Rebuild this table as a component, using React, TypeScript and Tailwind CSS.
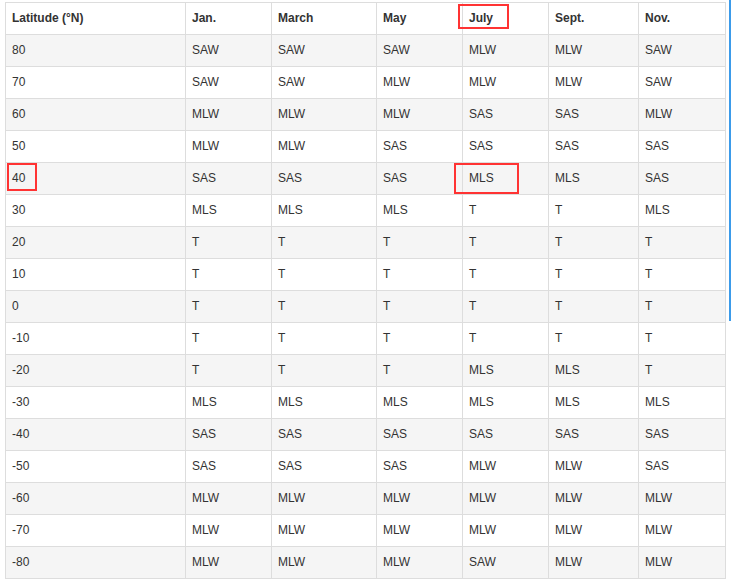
const months = ['Jan.', 'March', 'May', 'July', 'Sept.', 'Nov.'];

const rows: [string, string[]][] = [
  ['80', ['SAW', 'SAW', 'SAW', 'MLW', 'MLW', 'SAW']],
  ['70', ['SAW', 'SAW', 'MLW', 'MLW', 'MLW', 'SAW']],
  ['60', ['MLW', 'MLW', 'MLW', 'SAS', 'SAS', 'MLW']],
  ['50', ['MLW', 'MLW', 'SAS', 'SAS', 'SAS', 'SAS']],
  ['40', ['SAS', 'SAS', 'SAS', 'MLS', 'MLS', 'SAS']],
  ['30', ['MLS', 'MLS', 'MLS', 'T', 'T', 'MLS']],
  ['20', ['T', 'T', 'T', 'T', 'T', 'T']],
  ['10', ['T', 'T', 'T', 'T', 'T', 'T']],
  ['0', ['T', 'T', 'T', 'T', 'T', 'T']],
  ['-10', ['T', 'T', 'T', 'T', 'T', 'T']],
  ['-20', ['T', 'T', 'T', 'MLS', 'MLS', 'T']],
  ['-30', ['MLS', 'MLS', 'MLS', 'MLS', 'MLS', 'MLS']],
  ['-40', ['SAS', 'SAS', 'SAS', 'SAS', 'SAS', 'SAS']],
  ['-50', ['SAS', 'SAS', 'SAS', 'MLW', 'MLW', 'SAS']],
  ['-60', ['MLW', 'MLW', 'MLW', 'MLW', 'MLW', 'MLW']],
  ['-70', ['MLW', 'MLW', 'MLW', 'MLW', 'MLW', 'MLW']],
  ['-80', ['MLW', 'MLW', 'MLW', 'SAW', 'MLW', 'MLW']],
];

const cell = 'flex h-[32px] items-center border-r border-b border-[#dddddd] pb-[2px] pl-[6px]';

export default function App() {
  return (
    <div className="relative h-[584px] w-[731px] overflow-hidden bg-white pt-[2px] pl-[5px] font-['Liberation_Sans',Arial,sans-serif] text-[12px] text-[#333333]">
      <div className="grid w-[721px] grid-cols-[180px_86px_105px_86px_86px_90px_87px] border-t border-l border-[#dddddd]">
        <div className={`${cell} font-bold`}>Latitude (°N)</div>
        {months.map((m) => (
          <div key={m} className={`${cell} font-bold`}>
            {m}
          </div>
        ))}
        {rows.map(([lat, vals], i) => (
          <div key={lat} className="contents">
            <div className={`${cell} ${i % 2 === 0 ? 'bg-[#f5f5f5]' : 'bg-white'}`}>{lat}</div>
            {vals.map((v, j) => (
              <div key={j} className={`${cell} ${i % 2 === 0 ? 'bg-[#f5f5f5]' : 'bg-white'}`}>
                {v}
              </div>
            ))}
          </div>
        ))}
      </div>

      {/* highlight boxes */}
      <div className="absolute top-[4px] left-[458px] h-[25px] w-[51px] border-2 border-[#ff3333]" />
      <div className="absolute top-[163px] left-[7px] h-[28px] w-[30px] border-2 border-[#ff3333]" />
      <div className="absolute top-[163px] left-[454px] h-[31px] w-[65px] border-2 border-[#ff3333]" />

      {/* scroll indicator */}
      <div className="absolute top-0 left-[729px] h-[321px] w-[2px] bg-[#3b9bea]" />
    </div>
  );
}
